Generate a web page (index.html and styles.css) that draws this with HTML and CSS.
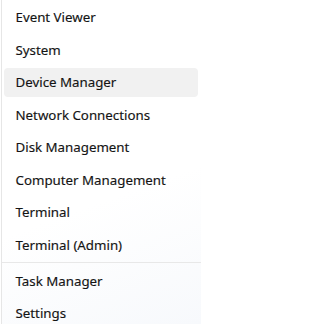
FILE: index.html
```html
<!DOCTYPE html>
<html lang="en">
<head>
<meta charset="utf-8">
<title>Menu</title>
<link rel="stylesheet" href="styles.css">
</head>
<body>
<div class="menu">
  <div class="item">Event Viewer</div>
  <div class="item">System</div>
  <div class="item hover">Device Manager</div>
  <div class="item">Network Connections</div>
  <div class="item">Disk Management</div>
  <div class="item">Computer Management</div>
  <div class="item">Terminal</div>
  <div class="item">Terminal (Admin)</div>
  <div class="sep"></div>
  <div class="item">Task Manager</div>
  <div class="item">Settings</div>
</div>
</body>
</html>
```
FILE: styles.css
```css
html, body {
  margin: 0;
  padding: 0;
  background: #ffffff;
}
body {
  width: 201px;
  height: 324px;
  overflow: hidden;
}
.menu {
  box-sizing: border-box;
  height: 324px;
  margin-left: 1px;
  border-left: 1px solid #e6e6e6;
  padding-top: 1px;
  display: flex;
  flex-direction: column;
  background: linear-gradient(160deg, #ffffff 60%, #f7f9fc 100%);
  font-family: "Noto Sans", "Open Sans", sans-serif;
  font-size: 13.3px;
  color: #141414;
  -webkit-text-stroke: 0.15px #141414;
}
.item {
  flex: none;
  height: 28.5px;
  margin: 2px 3px 2px 2px;
  padding-left: 11.5px;
  display: flex;
  align-items: center;
  border-radius: 4px;
  white-space: nowrap;
}
.item.hover {
  background: #f1f1f1;
}
.sep {
  flex: none;
  height: 1px;
  margin: 1px 0 1.5px;
  background: #e8e8e8;
}
```
